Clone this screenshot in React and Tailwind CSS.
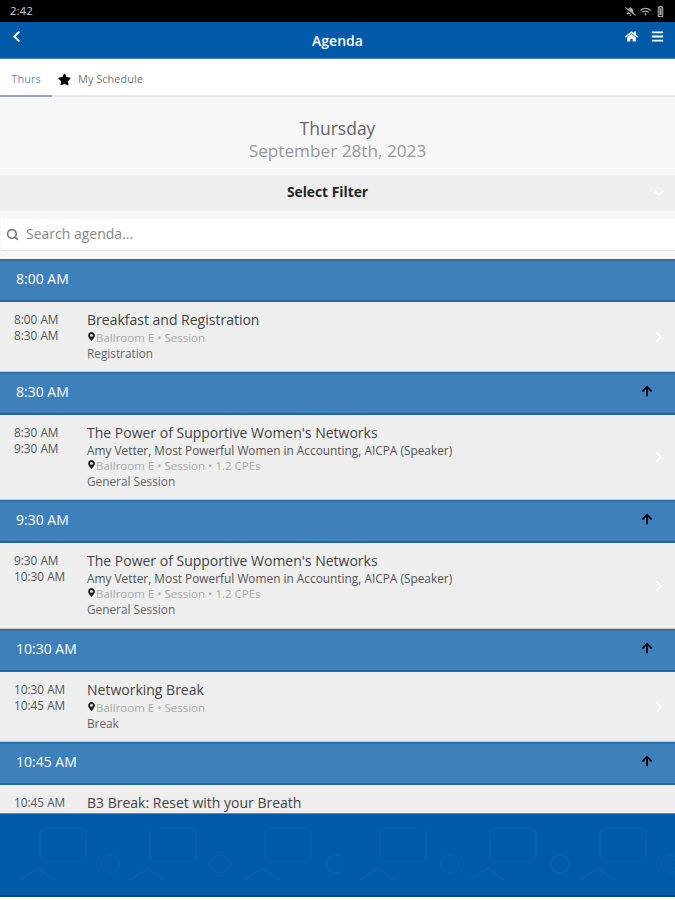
import { ChevronRight, ChevronDown, Search } from "lucide-react";
import { FaArrowUp, FaBars, FaBatteryFull, FaBellSlash, FaChevronLeft, FaHome, FaMapMarkerAlt, FaStar, FaWifi } from "react-icons/fa";

const agenda = [
  {
    time: "8:00 AM",
    rowHeight: "h-[70px]",
    start: "8:00 AM",
    end: "8:30 AM",
    title: "Breakfast and Registration",
    place: "Ballroom E • Session",
    kind: "Registration",
  },
  {
    time: "8:30 AM",
    up: true,
    rowHeight: "h-[85px]",
    start: "8:30 AM",
    end: "9:30 AM",
    title: "The Power of Supportive Women's Networks",
    speaker: "Amy Vetter, Most Powerful Women in Accounting, AICPA (Speaker)",
    place: "Ballroom E • Session • 1.2 CPEs",
    kind: "General Session",
  },
  {
    time: "9:30 AM",
    up: true,
    rowHeight: "h-[86px]",
    start: "9:30 AM",
    end: "10:30 AM",
    title: "The Power of Supportive Women's Networks",
    speaker: "Amy Vetter, Most Powerful Women in Accounting, AICPA (Speaker)",
    place: "Ballroom E • Session • 1.2 CPEs",
    kind: "General Session",
  },
  {
    time: "10:30 AM",
    up: true,
    rowHeight: "h-[70px]",
    start: "10:30 AM",
    end: "10:45 AM",
    title: "Networking Break",
    place: "Ballroom E • Session",
    kind: "Break",
  },
  {
    time: "10:45 AM",
    up: true,
    rowHeight: "h-[70px]",
    start: "10:45 AM",
    title: "B3 Break: Reset with your Breath",
  },
];

// faint doodles in the footer background
const doodleX = [40, 150, 265, 380, 490, 600];

const Section = ({ item }) => (
  <>
    <div className="h-[43px] shrink-0 flex items-center justify-between bg-[#3e80b9] border-y-2 border-t-[#2f6fa6] border-b-[#22659f] pl-4 pr-[22px]">
      <span className="text-[14px] mb-[4px] text-white">{item.time}</span>
      {item.up && <FaArrowUp size={12} className="text-black mb-[5px]" />}
    </div>
    <div className={`${item.rowHeight} shrink-0 flex bg-[#eeeeee] border-b border-[#c4c4c4] relative`}>
      <div className="w-[87px] shrink-0 pl-[14px] pt-[9px] text-[11.8px] leading-[16px] text-[#555]">
        <div>{item.start}</div>
        {item.end && <div>{item.end}</div>}
      </div>
      <div className="pt-[8px] min-w-0">
        <div className="text-[14px] leading-[19px] mb-[1px] text-[#444]">{item.title}</div>
        {item.speaker && <div className="text-[11.87px] leading-[15px] text-[#555]">{item.speaker}</div>}
        {item.place && (
          <div className="flex items-center text-[11.5px] leading-[15px] text-[#aaa]">
            <FaMapMarkerAlt size={9} className="text-[#222] shrink-0 mb-[2px]" />
            <span>{item.place}</span>
          </div>
        )}
        {item.kind && <div className="text-[11.8px] leading-[15px] mt-[1px] text-[#666]">{item.kind}</div>}
      </div>
      <ChevronRight size={16} strokeWidth={3} className="absolute right-2 top-1/2 -translate-y-1/2 text-white" />
    </div>
  </>
);

export default function App() {
  return (
    <div className="h-[900px] w-[675px] flex flex-col overflow-hidden bg-white font-['Open_Sans',sans-serif]">
      <div className="h-[22px] shrink-0 bg-black flex items-center justify-between pl-[10px] pr-[9px]">
        <span className="text-[11.5px] text-[#ccc]">2:42</span>
        <div className="flex items-center gap-[4px] text-[#aaa]">
          <FaBellSlash size={11} />
          <FaWifi size={11} />
          <FaBatteryFull size={11} className="-rotate-90" />
        </div>
      </div>

      <div className="h-[37px] shrink-0 bg-[#005aa7] flex items-center justify-between pl-[10px] pr-[11px] border-b border-[#3f7fc0]">
        <div className="w-[61px] mb-[7px]">
          <FaChevronLeft size={13} className="text-white" />
        </div>
        <span className="text-[14px] font-semibold text-white">Agenda</span>
        <div className="w-[60px] flex items-center justify-end gap-[13px] mb-[7px]">
          <FaHome size={13} className="text-white" />
          <FaBars size={13} className="text-white" />
        </div>
      </div>

      <div className="h-[38px] shrink-0 flex bg-white border-b-2 border-[#e8e8e8]">
        <div className="w-[52px] h-[38px] flex items-center justify-center border-b-2 border-[#8fa5c7] pt-[4px] text-[11px] text-[#6d8fb0]">
          Thurs
        </div>
        <div className="flex items-center pl-[6px] pt-[4px] gap-[7px] text-[11px] text-[#777]">
          <FaStar size={13} className="text-black" />
          <span>My Schedule</span>
        </div>
      </div>

      <div className="h-[78px] shrink-0 bg-[#f7f7f7] flex flex-col items-center pt-[20px]">
        <div className="text-[17.5px] leading-[23px] text-[#666]">Thursday</div>
        <div className="text-[17.2px] leading-[22px] text-[#999]">September 28th, 2023</div>
      </div>

      <div className="h-[36px] shrink-0 bg-[#eeeeee] flex items-center justify-center pr-5 relative">
        <span className="text-[13.8px] font-bold mb-[2px] text-[#222]">Select Filter</span>
        <ChevronDown size={16} strokeWidth={3} className="absolute right-2 top-[10px] text-white" />
      </div>

      <div className="h-[48px] shrink-0 bg-[#f7f7f7] py-[8px] pl-[1px]">
        <div className="h-[32px] bg-white border-b border-[#e4e4e4] flex items-center pl-[5px] gap-[7px]">
          <Search size={13} strokeWidth={3} className="text-[#777]" />
          <span className="text-[14px] mb-[2px] text-[#888]">Search agenda...</span>
        </div>
      </div>

      <div className="flex-1 min-h-0 overflow-hidden">
        {agenda.map((item) => (
          <Section key={item.time} item={item} />
        ))}
      </div>

      <div className="h-[84px] shrink-0 bg-[#005aa7] border-t border-t-[#4c8fca] border-b-2 border-b-[#004a90]">
        <svg width="675" height="81" className="block" fill="none" stroke="#0a60ab" strokeWidth="1">
          {doodleX.map((x) => (
            <g key={x}>
              <rect x={x} y="14" width="46" height="34" rx="6" />
              <circle cx={x + 70} cy="50" r="9" />
              <path d={`M${x - 20} 66 l18 -12 l16 12`} />
            </g>
          ))}
        </svg>
      </div>
      <div className="h-[3px] shrink-0 bg-white" />
    </div>
  );
}
